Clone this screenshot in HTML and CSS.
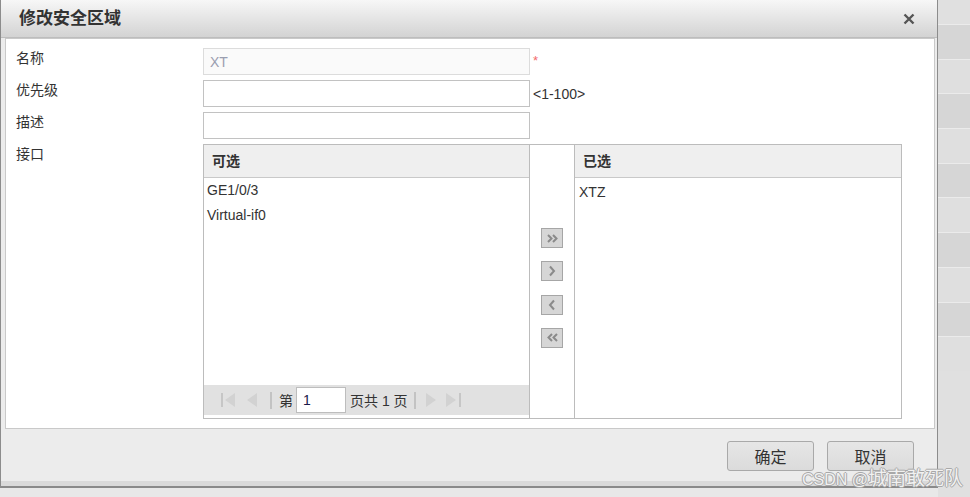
FILE: index.html
```html
<!DOCTYPE html>
<html lang="zh">
<head>
<meta charset="UTF-8">
<meta name="viewport" content="width=device-width, initial-scale=1.0">
<title>修改安全区域</title>
<link rel="stylesheet" href="styles.css">
</head>
<body>
<div class="page">
    <div class="dialog">
        <div class="dialog-head">
            <span class="dialog-title">修改安全区域</span>
            <span class="close">
                <svg width="12" height="12" viewBox="0 0 12 12"><path d="M1.5 1.5 L10.5 10.5 M10.5 1.5 L1.5 10.5" stroke="#555" stroke-width="2.4" fill="none"/></svg>
            </span>
        </div>

        <div class="dialog-body">
            <div class="form-row">
                <label class="form-label">名称</label>
                <input class="field readonly" value="XT" readonly>
                <span class="required">*</span>
            </div>
            <div class="form-row">
                <label class="form-label">优先级</label>
                <input class="field">
                <span class="hint">&lt;1-100&gt;</span>
            </div>
            <div class="form-row">
                <label class="form-label">描述</label>
                <input class="field">
            </div>
            <div class="form-row">
                <label class="form-label">接口</label>
                <div class="picker">
                    <div class="pick-box left">
                        <div class="pick-head">可选</div>
                        <ul class="pick-list">
                            <li>GE1/0/3</li>
                            <li>Virtual-if0</li>
                        </ul>
                        <div class="pager">
                            <svg class="pg-first" width="15" height="14" viewBox="0 0 15 14"><rect x="0" y="0" width="2" height="14" fill="#c6c6c6"/><path d="M14 0 L4 7 L14 14 Z" fill="#d2d2d2"/></svg>
                            <svg class="pg-prev" width="10" height="14" viewBox="0 0 10 14"><path d="M10 0 L0 7 L10 14 Z" fill="#d2d2d2"/></svg>
                            <span class="pg-sep"></span>
                            <span class="pg-text">第</span>
                            <input class="pg-input" value="1">
                            <span class="pg-text">页共 1 页</span>
                            <span class="pg-sep"></span>
                            <svg class="pg-next" width="10" height="14" viewBox="0 0 10 14"><path d="M0 0 L10 7 L0 14 Z" fill="#d2d2d2"/></svg>
                            <svg class="pg-last" width="15" height="14" viewBox="0 0 15 14"><path d="M0 0 L10 7 L0 14 Z" fill="#d2d2d2"/><rect x="13" y="0" width="2" height="14" fill="#c6c6c6"/></svg>
                        </div>
                    </div>
                    <div class="pick-actions">
                        <button class="move-btn"><svg width="11" height="9" viewBox="0 0 11 9"><path d="M1 1 L4.5 4.5 L1 8 M6 1 L9.5 4.5 L6 8" stroke="#8a8a8a" stroke-width="2" fill="none"/></svg></button>
                        <button class="move-btn"><svg width="10" height="12" viewBox="0 0 10 12"><path d="M3 1.5 L7 6 L3 10.5" stroke="#8a8a8a" stroke-width="2" fill="none"/></svg></button>
                        <button class="move-btn"><svg width="10" height="12" viewBox="0 0 10 12"><path d="M7 1.5 L3 6 L7 10.5" stroke="#8a8a8a" stroke-width="2" fill="none"/></svg></button>
                        <button class="move-btn"><svg width="11" height="9" viewBox="0 0 11 9"><path d="M5 1 L1.5 4.5 L5 8 M10 1 L6.5 4.5 L10 8" stroke="#8a8a8a" stroke-width="2" fill="none"/></svg></button>
                    </div>
                    <div class="pick-box right">
                        <div class="pick-head">已选</div>
                        <ul class="pick-list">
                            <li>XTZ</li>
                        </ul>
                    </div>
                </div>
            </div>
        </div>

        <div class="dialog-foot">
            <button class="foot-btn">确定</button>
            <button class="foot-btn">取消</button>
        </div>
    </div>

    <div class="side">
        <div class="side-row"></div>
        <div class="side-row"></div>
        <div class="side-row"></div>
        <div class="side-row"></div>
        <div class="side-row"></div>
        <div class="side-row"></div>
        <div class="side-row"></div>
        <div class="side-row"></div>
        <div class="side-row"></div>
        <div class="side-row"></div>
        <div class="side-row"></div>
    </div>
</div>
<div class="watermark"><span class="wm-latin">CSDN @</span>城南敢死队</div>
</body>
</html>
```

FILE: styles.css
```css
body{
    margin: 0;
    background-color: #e8e8e8;
    font-family: "Liberation Sans", "Noto Sans CJK SC", sans-serif;
    font-size: 14px;
    color: #333;
}
.page{
    display: flex;
    height: 497px;
}
.dialog{
    width: 938px;
    height: 488px;
    box-sizing: border-box;
    border: 1px solid #8c8c8c;
    border-top: none;
    border-bottom: 2px solid #8a8a8a;
    background-color: #ececec;
    display: flex;
    flex-direction: column;
    flex-shrink: 0;
}
.dialog-head{
    height: 37px;
    border-bottom: 1px solid #bdbdbd;
    background: linear-gradient(#f7f7f7, #d3d3d3);
    display: flex;
    align-items: center;
    justify-content: space-between;
    padding: 0 22px 0 18px;
}
.dialog-title{
    font-size: 17px;
    font-weight: bold;
    color: #333;
    line-height: 20px;
}
.close{
    display: flex;
    margin-top: 1px;
}
.dialog-body{
    height: 391px;
    box-sizing: border-box;
    margin: 0 2px 0 4px;
    border: 1px solid #c9c9c9;
    background-color: #fff;
    padding: 9px 0 0 10px;
}
.form-row{
    display: flex;
    align-items: flex-start;
    margin-bottom: 5px;
}
.form-label{
    width: 187px;
    line-height: 20px;
    flex-shrink: 0;
}
.field{
    width: 327px;
    height: 27px;
    box-sizing: border-box;
    border: 1px solid #c2c2c2;
    padding: 0 6px;
    margin: 0;
    font-family: inherit;
    font-size: 14px;
    color: #333;
    outline: none;
}
.field.readonly{
    background-color: #fafafa;
    border-color: #dcdcdc;
    color: #9a9eb0;
}
.required{
    color: #f26b6b;
    font-size: 13px;
    margin: 5px 0 0 3px;
}
.hint{
    align-self: center;
    margin: 1px 0 0 3px;
    color: #333;
}
.picker{
    width: 699px;
    height: 275px;
    box-sizing: border-box;
    border: 1px solid #bcbcbc;
    display: flex;
}
.pick-box{
    display: flex;
    flex-direction: column;
}
.pick-box.left{
    width: 325px;
}
.pick-box.right{
    flex: 1;
}
.pick-head{
    height: 32px;
    border-bottom: 1px solid #c9c9c9;
    background-color: #efefef;
    font-weight: bold;
    line-height: 32px;
    padding-left: 8px;
    color: #333;
}
.pick-list{
    list-style: none;
    margin: 0;
    padding: 0 0 0 3px;
    flex: 1;
}
.pick-list li{
    line-height: 25px;
}
.right .pick-list{
    padding: 2px 0 0 4px;
}
.pager{
    height: 30px;
    margin-bottom: 3px;
    background-color: #e1e1e1;
    display: flex;
    align-items: center;
    padding-left: 17px;
}
.pg-prev{
    margin-left: 11px;
}
.pg-sep{
    width: 2px;
    height: 17px;
    background-color: #c3c3c3;
    margin: 0 7px 0 13px;
}
.pg-input{
    width: 50px;
    height: 26px;
    box-sizing: border-box;
    border: 1px solid #bdbdbd;
    margin: 0 4px 0 3px;
    padding: 0 6px;
    font-family: inherit;
    font-size: 14px;
    color: #1a1a4a;
    outline: none;
}
.pg-text + .pg-sep{
    margin: 0 10px 0 6px;
}
.pg-last{
    margin-left: 10px;
}
.pick-actions{
    width: 44px;
    border-left: 1px solid #bcbcbc;
    border-right: 1px solid #bcbcbc;
    display: flex;
    flex-direction: column;
    align-items: center;
    gap: 13.3px;
    padding-top: 83px;
}
.move-btn{
    width: 22px;
    height: 20px;
    box-sizing: border-box;
    border: 1px solid #a6a6a6;
    background-color: #d6d6d6;
    padding: 0;
    display: flex;
    align-items: center;
    justify-content: center;
}
.dialog-foot{
    flex: 1;
    display: flex;
    justify-content: flex-end;
    align-items: flex-start;
    gap: 13px;
    padding: 12px 23px 0 0;
    box-shadow: inset 0 -5px 0 #dadada;
}
.foot-btn{
    width: 87px;
    height: 30px;
    border: 1px solid #a9a9a9;
    border-radius: 3px;
    background: linear-gradient(#e6e6e6, #dbdbdb);
    font-family: inherit;
    font-size: 16px;
    color: #333;
    padding: 0;
}
.side{
    flex: 1;
    display: flex;
    flex-direction: column;
    background-color: #e0e0e0;
}
.side-row{
    height: 34.7px;
    box-sizing: border-box;
    border-top: 1px solid #ebebeb;
    background-color: #dfdfdf;
}
.side-row:nth-child(even){
    background-color: #d6d6d6;
}
.side-row:first-child{
    height: 24px;
    border-top: none;
    background-color: #e0e0e0;
}
.watermark{
    position: absolute;
    right: 7px;
    top: 467px;
    font-size: 19px;
    color: rgba(255, 255, 255, 0.85);
    text-shadow: 1px 0 0 #a8a8a8, -1px 0 0 #a8a8a8, 0 1px 0 #a8a8a8, 0 -1px 0 #a8a8a8;
    line-height: 24px;
}
.wm-latin{
    font-size: 16px;
}
```
